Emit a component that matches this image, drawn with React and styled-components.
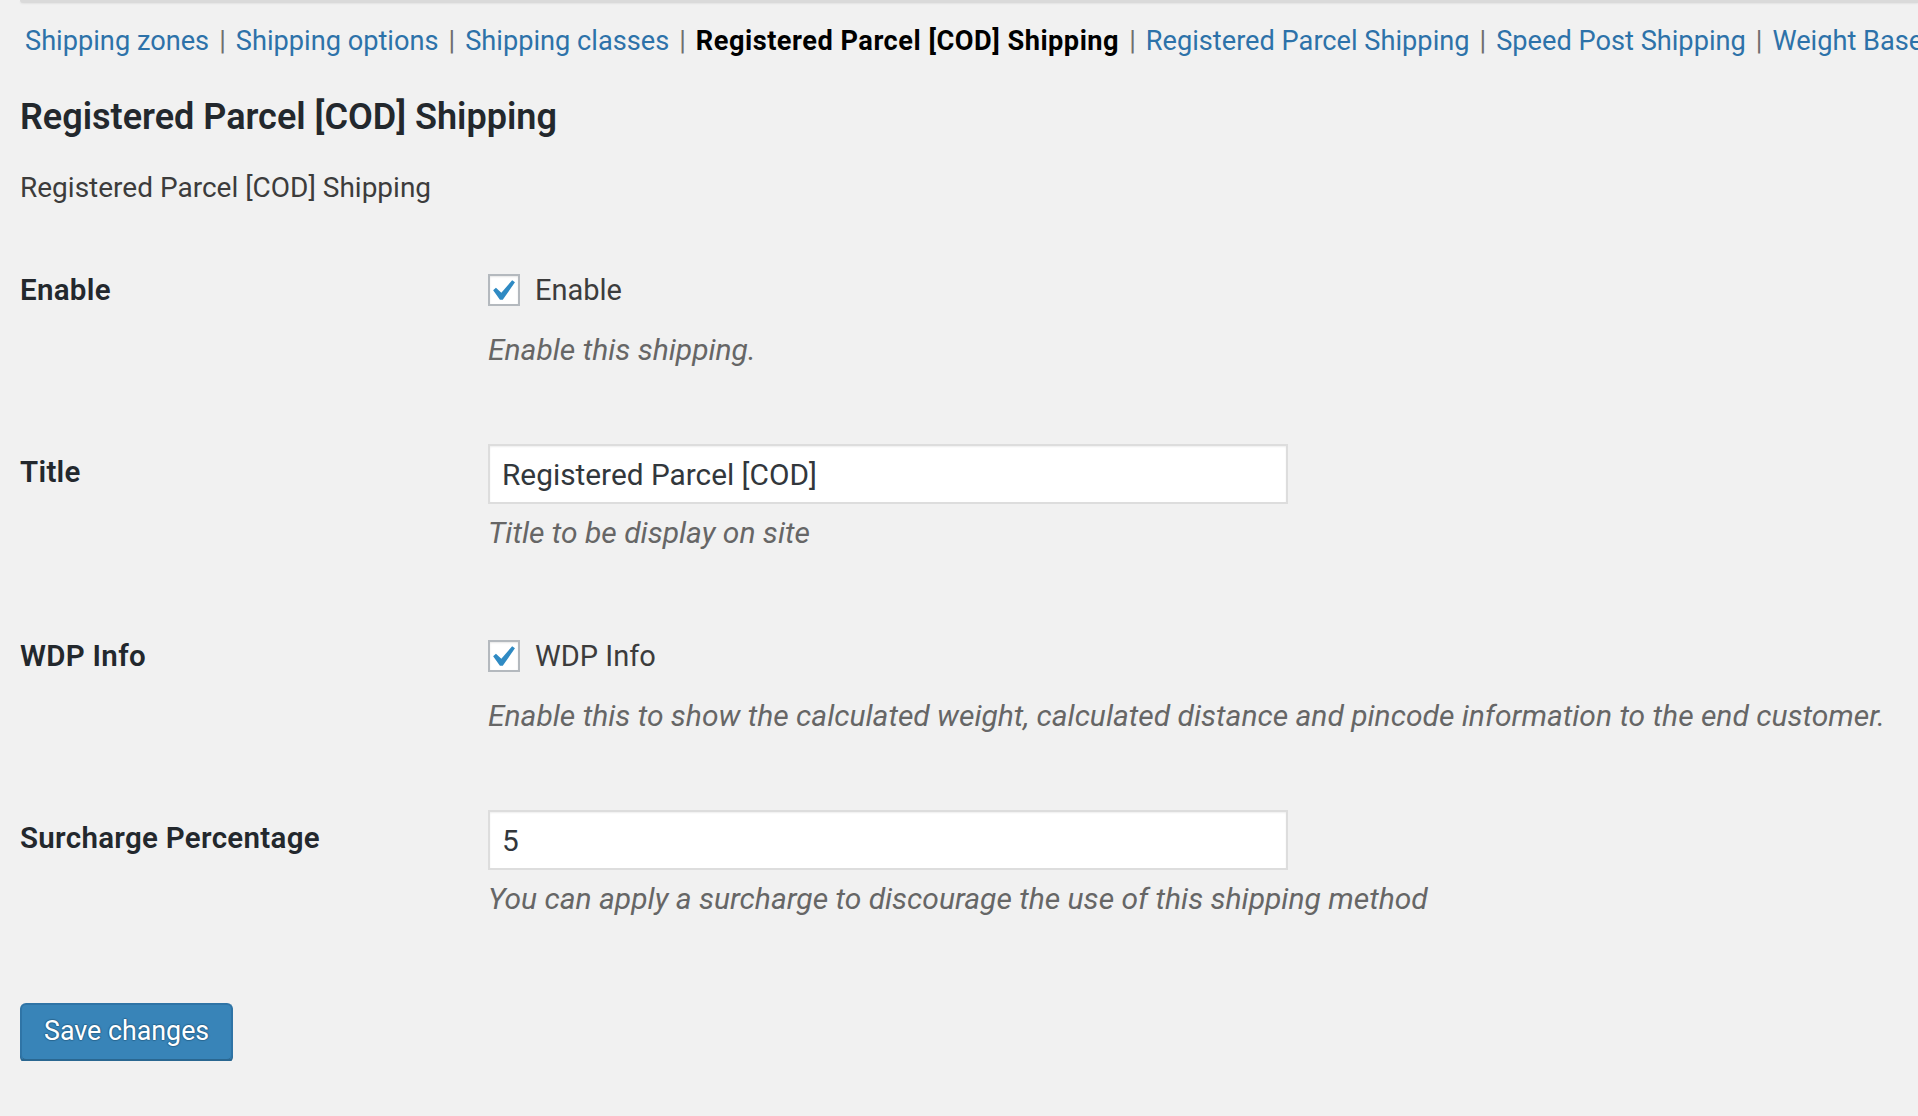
import React from 'react';
import styled, { createGlobalStyle } from 'styled-components';

const GlobalStyle = createGlobalStyle`
  html, body {
    margin: 0;
    padding: 0;
    background: #f1f1f1;
  }
  body {
    font-family: Roboto, "Liberation Sans", Arial, sans-serif;
    color: #444;
    -webkit-font-smoothing: antialiased;
  }
`;

const Wrap = styled.div`
  padding: 0 20px;
  overflow: hidden;
`;

const TopRule = styled.div`
  height: 3px;
  margin-right: -20px;
  background: #dadada;
  border-bottom-left-radius: 3px;
  box-shadow: 0 1px 2px rgba(0, 0, 0, 0.06);
`;

const SubNav = styled.ul`
  display: flex;
  align-items: center;
  white-space: nowrap;
  height: 52px;
  margin: 12px -20px 0 0;
  padding: 0;
  list-style: none;
  font-size: 27.2px;
  color: #6e6e6e;
`;

const NavItem = styled.li`
  display: flex;
  align-items: center;
`;

const NavLink = styled.a`
  padding: 0 5px;
  color: ${p => (p.current ? '#000' : '#2d72a9')};
  font-weight: ${p => (p.current ? 700 : 400)};
  letter-spacing: ${p => (p.current ? '0.5px' : '0')};
  text-decoration: none;
`;

const Sep = styled.span`
  padding: 0 5px;
  color: #6e6e6e;
`;

const Heading = styled.h2`
  margin: 28px 0 0;
  font-size: 36px;
  line-height: 44px;
  font-weight: 600;
  color: #23282d;
`;

const Intro = styled.p`
  margin: 28px 0 0;
  font-size: 28px;
  line-height: 42px;
  color: #3c3c3c;
`;

const FormTable = styled.div`
  margin-top: 23px;
`;

const Row = styled.div`
  display: grid;
  grid-template-columns: 448px 1fr;
  align-items: start;
`;

const Th = styled.div`
  padding: 40px 0;
  font-size: 29.5px;
  line-height: 36px;
  letter-spacing: 0.3px;
  font-weight: 600;
  color: #23282d;
`;

const Td = styled.div`
  padding: 30px 20px ${p => p.bottom}px;
`;

const CheckLine = styled.label`
  display: flex;
  align-items: center;
  gap: 15px;
  height: 56px;
  font-size: 29px;
  color: #3c3c3c;
`;

const Box = styled.span`
  position: relative;
  box-sizing: border-box;
  width: 32px;
  height: 32px;
  border: 2px solid #b4b9be;
  background: #fff;
  box-shadow: inset 0 1px 2px rgba(0, 0, 0, 0.1);
`;

const Tick = styled.svg`
  position: absolute;
  left: -9px;
  top: -6px;
  width: 42px;
  height: 42px;
`;

const TextInput = styled.input`
  display: block;
  box-sizing: border-box;
  width: 800px;
  height: 60px;
  margin: 0;
  padding: 0 12px;
  border: 2px solid #dddddd;
  background: #fff;
  box-shadow: inset 0 1px 2px rgba(0, 0, 0, 0.07);
  font-family: inherit;
  font-size: 29.8px;
  color: #32373c;
  outline: none;
`;

const Description = styled.p`
  margin: ${p => p.gap}px 0 0;
  font-size: 30px;
  line-height: 42px;
  font-style: italic;
  color: #666;
  white-space: nowrap;
`;

const SaveButton = styled.button`
  display: block;
  box-sizing: border-box;
  height: 58px;
  margin: 39px 0 0;
  padding: 0 22px 2px;
  border: 2px solid #2f74a6;
  border-bottom-color: #2a6791;
  border-radius: 6px;
  background: #3884b8;
  box-shadow: 0 2px 0 #2a6791;
  color: #fff;
  font-family: inherit;
  font-size: 26.8px;
  text-shadow: 0 -1px 1px #2a6791, 1px 0 1px #2a6791, 0 1px 1px #2a6791, -1px 0 1px #2a6791;
  cursor: pointer;
`;

const navLinks = [
  { text: 'Shipping zones' },
  { text: 'Shipping options' },
  { text: 'Shipping classes' },
  { text: 'Registered Parcel [COD] Shipping', current: true },
  { text: 'Registered Parcel Shipping' },
  { text: 'Speed Post Shipping' },
  { text: 'Weight Based Shipping' },
];

const Checkbox = () => (
  <Box>
    <Tick viewBox="0 0 20 20">
      <path d="M14.83 4.89l1.34.94-5.81 8.38H9.02L5.78 9.67l1.34-1.25 2.57 2.4z" fill="#2f8ac3" />
    </Tick>
  </Box>
);

const fields = [
  { label: 'Enable', type: 'checkbox', text: 'Enable', desc: 'Enable this shipping.' },
  { label: 'Title', type: 'text', value: 'Registered Parcel [COD]', desc: 'Title to be display on site' },
  {
    label: 'WDP Info',
    type: 'checkbox',
    text: 'WDP Info',
    desc: 'Enable this to show the calculated weight, calculated distance and pincode information to the end customer.',
  },
  {
    label: 'Surcharge Percentage',
    type: 'text',
    value: '5',
    desc: 'You can apply a surcharge to discourage the use of this shipping method',
  },
];

const App = () => (
  <>
    <GlobalStyle />
    <Wrap>
      <TopRule />
      <SubNav>
        {navLinks.map((link, i) => (
          <NavItem key={link.text}>
            {i > 0 && <Sep>|</Sep>}
            <NavLink href="#" current={link.current ? 1 : 0}>{link.text}</NavLink>
          </NavItem>
        ))}
      </SubNav>
      <Heading>Registered Parcel [COD] Shipping</Heading>
      <Intro>Registered Parcel [COD] Shipping</Intro>
      <FormTable>
        {fields.map(f => (
          <Row key={f.label}>
            <Th>{f.label}</Th>
            <Td bottom={f.type === 'checkbox' ? 43 : 44}>
              {f.type === 'checkbox' ? (
                <CheckLine>
                  <Checkbox />
                  {f.text}
                </CheckLine>
              ) : (
                <TextInput type="text" defaultValue={f.value} />
              )}
              <Description gap={f.type === 'checkbox' ? 11 : 8}>{f.desc}</Description>
            </Td>
          </Row>
        ))}
      </FormTable>
      <SaveButton type="button">Save changes</SaveButton>
    </Wrap>
  </>
);

export default App;
